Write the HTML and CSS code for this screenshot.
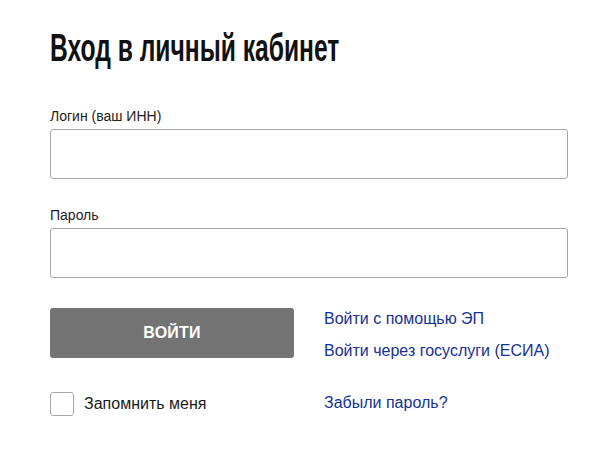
FILE: index.html
```html
<!DOCTYPE html>
<html lang="ru">
<head>
<meta charset="utf-8">
<title>Вход в личный кабинет</title>
<link rel="stylesheet" href="styles.css">
</head>
<body>
<div class="page">
  <h1 class="title"><span class="title-text">Вход в личный кабинет</span></h1>
  <form class="form">
    <div class="field">
      <label class="label" for="login">Логин (ваш ИНН)</label>
      <input class="input" id="login" type="text">
    </div>
    <div class="field field-second">
      <label class="label" for="pass">Пароль</label>
      <input class="input" id="pass" type="password">
    </div>
    <div class="actions">
      <div class="col-left">
        <button class="btn" type="button">ВОЙТИ</button>
        <label class="remember">
          <span class="checkbox"></span>
          <span class="remember-text">Запомнить меня</span>
        </label>
      </div>
      <div class="col-right">
        <a class="link" href="#">Войти с помощью ЭП</a>
        <a class="link" href="#">Войти через госуслуги (ЕСИА)</a>
        <a class="link link-forgot" href="#">Забыли пароль?</a>
      </div>
    </div>
  </form>
</div>
</body>
</html>
```

FILE: styles.css
```css
html, body {
  margin: 0;
  padding: 0;
  background: #ffffff;
}

body {
  font-family: "Liberation Sans", Arial, sans-serif;
  color: #1a1a1a;
}

.page {
  padding: 0 46px 0 50px;
}

.title {
  margin: 0;
  padding-top: 26px;
  font-family: "Liberation Sans", Arial, sans-serif;
  font-weight: bold;
  font-size: 38px;
  line-height: 44px;
  color: #111111;
  white-space: nowrap;
}

.title-text {
  display: inline-block;
  transform: scaleX(0.648);
  transform-origin: left center;
}

.form {
  margin-top: 38px;
}

.field {
  display: flex;
  flex-direction: column;
}

.field-second {
  margin-top: 28px;
}

.label {
  font-size: 14px;
  line-height: 16px;
  color: #222222;
  margin-bottom: 5px;
}

.input {
  box-sizing: border-box;
  width: 518px;
  height: 50px;
  border: 1px solid #a6a6a6;
  border-radius: 3px;
  background: #fff;
  margin: 0;
  padding: 0 12px;
  font-size: 15px;
}

.actions {
  display: flex;
  margin-top: 30px;
}

.col-left {
  width: 244px;
  display: flex;
  flex-direction: column;
}

.btn {
  box-sizing: border-box;
  width: 244px;
  height: 50px;
  border: 0;
  border-radius: 3px;
  background: #737373;
  color: #ffffff;
  font-family: "Liberation Sans", Arial, sans-serif;
  font-weight: bold;
  font-size: 16px;
  letter-spacing: 0.2px;
  padding: 0;
}

.remember {
  display: flex;
  align-items: center;
  margin-top: 34px;
}

.checkbox {
  box-sizing: border-box;
  width: 24px;
  height: 24px;
  border: 1px solid #a6a6a6;
  border-radius: 3px;
  background: #fff;
}

.remember-text {
  margin-left: 10px;
  font-size: 16px;
  line-height: 18px;
  color: #1a1a1a;
}

.col-right {
  display: flex;
  flex-direction: column;
  margin-left: 30px;
  padding-top: 2px;
}

.link {
  font-size: 16px;
  line-height: 18px;
  color: #14309a;
  text-decoration: none;
}

.link + .link {
  margin-top: 14px;
}

.link.link-forgot {
  margin-top: 34px;
}
```
